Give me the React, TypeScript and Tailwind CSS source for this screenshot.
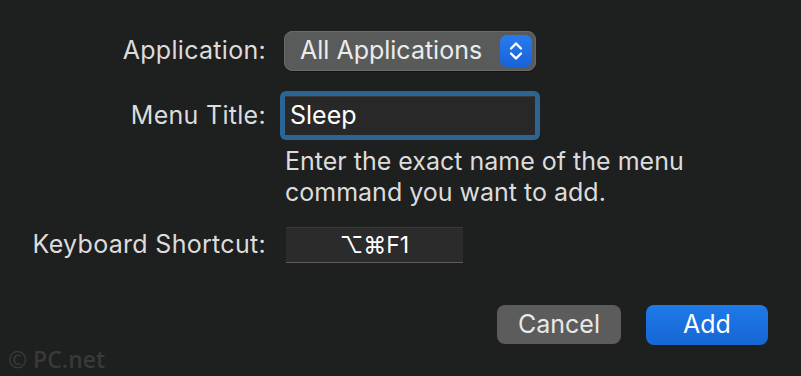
import { memo } from 'react';

function Label({ children }: { children: React.ReactNode }) {
  return (
    <div className="w-[266px] shrink-0 text-right text-[25px] tracking-[0.3px] text-[#dcdcdc]">
      {children}
    </div>
  );
}

function App() {
  return (
    <div className="relative w-[801px] h-[376px] bg-[#1e1f1f] overflow-hidden font-['Inter',sans-serif] text-[#e4e4e4]">
      <div className="flex flex-col pt-[31px]">
        {/* Application row */}
        <div className="flex items-center gap-[18px] h-[40px]">
          <Label>Application:</Label>
          <div className="flex items-center justify-between w-[252px] h-[40px] rounded-[8px] bg-[#595a5a] border border-[#6a6a6a] pl-[15px] pr-[3px] shadow-[0_1px_1px_rgba(0,0,0,0.4)]">
            <span className="text-[25px] text-[#ececec]">All Applications</span>
            <div className="flex items-center justify-center w-[32px] h-[32px] rounded-[7px] bg-gradient-to-b from-[#2a7bf0] to-[#1863d8]">
              <svg width="16" height="24" viewBox="0 0 16 24" fill="none" stroke="white" strokeWidth="2.4" strokeLinecap="round" strokeLinejoin="round">
                <path d="M3 9.5 L8 4.5 L13 9.5" />
                <path d="M3 14.5 L8 19.5 L13 14.5" />
              </svg>
            </div>
          </div>
        </div>

        {/* Menu title row */}
        <div className="flex items-center gap-[14px] mt-[20px] h-[49px]">
          <Label>Menu Title:</Label>
          <div className="w-[260px] h-[49px] rounded-[6px] bg-[#2a6593] p-[5px]">
            <div className="h-full bg-[#282828] border-t border-[#3a3a3a] flex items-center pl-[5px] text-[25px] text-white">
              Sleep
            </div>
          </div>
        </div>

        {/* Help text */}
        <div className="ml-[285px] mt-[6px] text-[25px] leading-[31px] text-[#dcdcdc]">
          <p>Enter the exact name of the menu</p>
          <p>command you want to add.</p>
        </div>

        {/* Shortcut row */}
        <div className="flex items-center gap-[20px] mt-[19px] h-[36px]">
          <Label>Keyboard Shortcut:</Label>
          <div className="w-[177px] h-[36px] bg-[#2b2b2b] border-t border-[#3a3a3a] border-b border-b-[#5c5c5c] flex items-center justify-center text-[23px] text-white font-['Inter','DejaVu_Sans',sans-serif]">
            ⌥⌘F1
          </div>
        </div>

        {/* Buttons */}
        <div className="flex justify-end gap-[25px] mt-[42px] pr-[33px]">
          <button className="w-[124px] h-[39px] rounded-[8px] bg-[#5b5c5b] text-[25px] text-[#e8e8e8]">
            Cancel
          </button>
          <button className="w-[122px] h-[40px] rounded-[8px] bg-gradient-to-b from-[#1d7ae8] to-[#1766d4] text-[25px] text-white">
            Add
          </button>
        </div>
      </div>

      {/* Watermark */}
      <div className="absolute left-[8px] bottom-[0px] text-[23px] font-semibold text-[#383939] font-['Open_Sans',sans-serif]">
        © PC.net
      </div>
    </div>
  );
}

export default memo(App);
